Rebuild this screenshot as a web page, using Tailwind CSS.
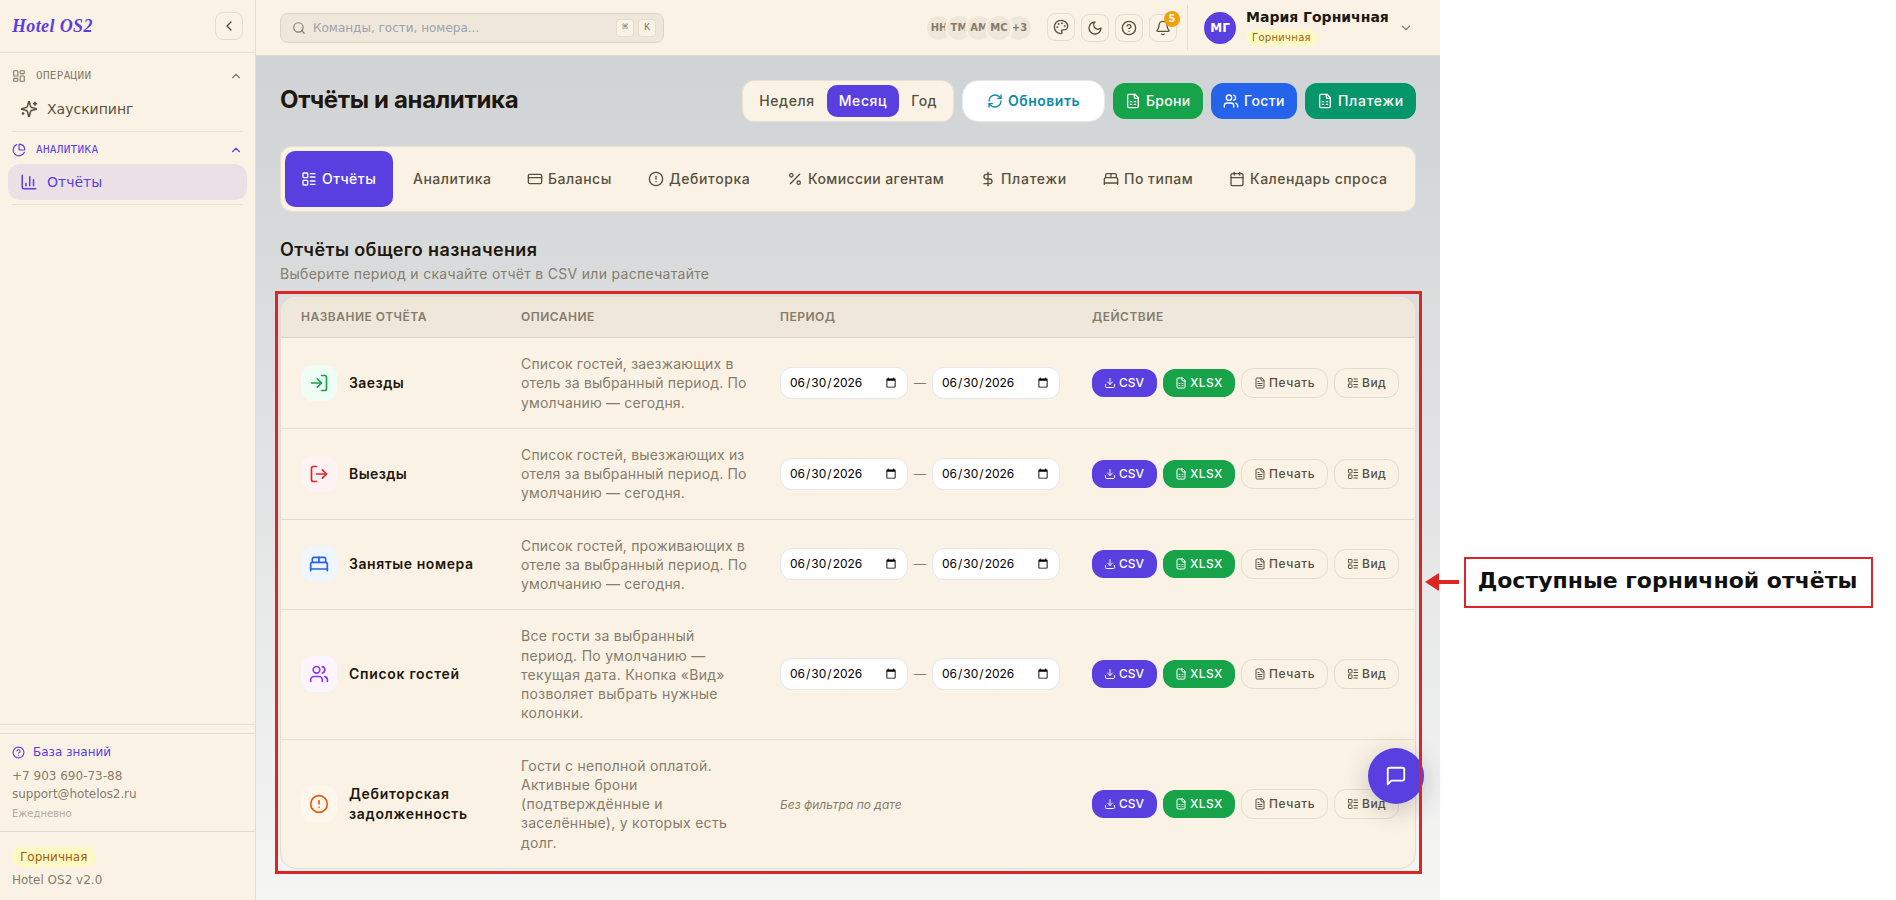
<!DOCTYPE html>
<html lang="ru">
<head>
  <meta charset="UTF-8">
  <title>Отчёты и аналитика — Hotel OS2</title>
  <script src="https://cdn.jsdelivr.net/npm/@tailwindcss/browser@4"></script>
  <style>
    body { font-family: "DejaVu Sans", sans-serif; }
    svg { fill: none; stroke: currentColor; stroke-width: 2; stroke-linecap: round; stroke-linejoin: round; flex-shrink: 0; }
  </style>
</head>
<body class="bg-white w-[1896px] h-[900px] overflow-hidden relative">

  <!-- Icon set -->
  <svg class="hidden">
    <symbol id="left" viewBox="0 0 24 24"><path d="m15 18-6-6 6-6"/></symbol>
    <symbol id="up" viewBox="0 0 24 24"><path d="m18 15-6-6-6 6"/></symbol>
    <symbol id="down" viewBox="0 0 24 24"><path d="m6 9 6 6 6-6"/></symbol>
    <symbol id="dashboard" viewBox="0 0 24 24"><rect width="7" height="9" x="3" y="3" rx="1"/><rect width="7" height="5" x="14" y="3" rx="1"/><rect width="7" height="9" x="14" y="12" rx="1"/><rect width="7" height="5" x="3" y="16" rx="1"/></symbol>
    <symbol id="sparkles" viewBox="0 0 24 24"><path d="M9.937 15.5A2 2 0 0 0 8.5 14.063l-6.135-1.582a.5.5 0 0 1 0-.962L8.5 9.936A2 2 0 0 0 9.937 8.5l1.582-6.135a.5.5 0 0 1 .963 0L14.063 8.5A2 2 0 0 0 15.5 9.937l6.135 1.581a.5.5 0 0 1 0 .964L15.5 14.063a2 2 0 0 0-1.437 1.437l-1.582 6.135a.5.5 0 0 1-.963 0z"/><path d="M20 3v4"/><path d="M22 5h-4"/><path d="M4 17v2"/><path d="M5 18H3"/></symbol>
    <symbol id="pie" viewBox="0 0 24 24"><path d="M21 12c.552 0 1.005-.449.95-.998a10 10 0 0 0-8.953-8.951c-.55-.055-.998.398-.998.95v8a1 1 0 0 0 1 1z"/><path d="M21.21 15.89A10 10 0 1 1 8 2.83"/></symbol>
    <symbol id="chart" viewBox="0 0 24 24"><path d="M3 3v16a2 2 0 0 0 2 2h16"/><path d="M18 17V9"/><path d="M13 17V5"/><path d="M8 17v-3"/></symbol>
    <symbol id="help" viewBox="0 0 24 24"><circle cx="12" cy="12" r="10"/><path d="M9.09 9a3 3 0 0 1 5.83 1c0 2-3 3-3 3"/><path d="M12 17h.01"/></symbol>
    <symbol id="search" viewBox="0 0 24 24"><circle cx="11" cy="11" r="8"/><path d="m21 21-4.3-4.3"/></symbol>
    <symbol id="palette" viewBox="0 0 24 24"><circle cx="13.5" cy="6.5" r=".5" fill="currentColor"/><circle cx="17.5" cy="10.5" r=".5" fill="currentColor"/><circle cx="8.5" cy="7.5" r=".5" fill="currentColor"/><circle cx="6.5" cy="12.5" r=".5" fill="currentColor"/><path d="M12 2C6.5 2 2 6.5 2 12s4.5 10 10 10c.926 0 1.648-.746 1.648-1.688 0-.437-.18-.835-.437-1.125-.29-.289-.438-.652-.438-1.125a1.64 1.64 0 0 1 1.668-1.668h1.996c3.051 0 5.555-2.503 5.555-5.554C21.965 6.012 17.461 2 12 2z"/></symbol>
    <symbol id="moon" viewBox="0 0 24 24"><path d="M12 3a6 6 0 0 0 9 9 9 9 0 1 1-9-9Z"/></symbol>
    <symbol id="bell" viewBox="0 0 24 24"><path d="M10.268 21a2 2 0 0 0 3.464 0"/><path d="M3.262 15.326A1 1 0 0 0 4 17h16a1 1 0 0 0 .74-1.673C19.41 13.956 18 12.499 18 8A6 6 0 0 0 6 8c0 4.499-1.411 5.956-2.738 7.326"/></symbol>
    <symbol id="refresh" viewBox="0 0 24 24"><path d="M3 12a9 9 0 0 1 9-9 9.75 9.75 0 0 1 6.74 2.74L21 8"/><path d="M21 3v5h-5"/><path d="M21 12a9 9 0 0 1-9 9 9.75 9.75 0 0 1-6.74-2.74L3 16"/><path d="M8 16H3v5"/></symbol>
    <symbol id="sheet" viewBox="0 0 24 24"><path d="M15 2H6a2 2 0 0 0-2 2v16a2 2 0 0 0 2 2h12a2 2 0 0 0 2-2V7Z"/><path d="M14 2v4a2 2 0 0 0 2 2h4"/><path d="M8 13h2"/><path d="M14 13h2"/><path d="M8 17h2"/><path d="M14 17h2"/></symbol>
    <symbol id="doc" viewBox="0 0 24 24"><path d="M15 2H6a2 2 0 0 0-2 2v16a2 2 0 0 0 2 2h12a2 2 0 0 0 2-2V7Z"/><path d="M14 2v4a2 2 0 0 0 2 2h4"/><path d="M10 9H8"/><path d="M16 13H8"/><path d="M16 17H8"/></symbol>
    <symbol id="users" viewBox="0 0 24 24"><path d="M16 21v-2a4 4 0 0 0-4-4H6a4 4 0 0 0-4 4v2"/><circle cx="9" cy="7" r="4"/><path d="M22 21v-2a4 4 0 0 0-3-3.87"/><path d="M16 3.13a4 4 0 0 1 0 7.75"/></symbol>
    <symbol id="list" viewBox="0 0 24 24"><rect width="7" height="7" x="3" y="3" rx="1"/><rect width="7" height="7" x="3" y="14" rx="1"/><path d="M14 4h7"/><path d="M14 9h7"/><path d="M14 15h7"/><path d="M14 20h7"/></symbol>
    <symbol id="card" viewBox="0 0 24 24"><rect width="20" height="14" x="2" y="5" rx="2"/><path d="M2 10h20"/></symbol>
    <symbol id="alert" viewBox="0 0 24 24"><circle cx="12" cy="12" r="10"/><path d="M12 8v4"/><path d="M12 16h.01"/></symbol>
    <symbol id="percent" viewBox="0 0 24 24"><path d="M19 5 5 19"/><circle cx="6.5" cy="6.5" r="2.5"/><circle cx="17.5" cy="17.5" r="2.5"/></symbol>
    <symbol id="dollar" viewBox="0 0 24 24"><path d="M12 2v20"/><path d="M17 5H9.5a3.5 3.5 0 0 0 0 7h5a3.5 3.5 0 0 1 0 7H6"/></symbol>
    <symbol id="bed" viewBox="0 0 24 24"><path d="M2 20v-8a2 2 0 0 1 2-2h16a2 2 0 0 1 2 2v8"/><path d="M4 10V6a2 2 0 0 1 2-2h12a2 2 0 0 1 2 2v4"/><path d="M12 4v6"/><path d="M2 18h20"/></symbol>
    <symbol id="calendar" viewBox="0 0 24 24"><path d="M8 2v4"/><path d="M16 2v4"/><rect width="18" height="18" x="3" y="4" rx="2"/><path d="M3 10h18"/></symbol>
    <symbol id="login" viewBox="0 0 24 24"><path d="M15 3h4a2 2 0 0 1 2 2v14a2 2 0 0 1-2 2h-4"/><path d="m10 17 5-5-5-5"/><path d="M15 12H3"/></symbol>
    <symbol id="logout" viewBox="0 0 24 24"><path d="M9 21H5a2 2 0 0 1-2-2V5a2 2 0 0 1 2-2h4"/><path d="m16 17 5-5-5-5"/><path d="M21 12H9"/></symbol>
    <symbol id="download" viewBox="0 0 24 24"><path d="M21 15v4a2 2 0 0 1-2 2H5a2 2 0 0 1-2-2v-4"/><path d="m7 10 5 5 5-5"/><path d="M12 15V3"/></symbol>
    <symbol id="message" viewBox="0 0 24 24"><path d="M21 15a2 2 0 0 1-2 2H7l-4 4V5a2 2 0 0 1 2-2h14a2 2 0 0 1 2 2z"/></symbol>
  </svg>

  <div class="flex w-[1440px] h-[900px] bg-linear-to-b from-[#cdd1d3] to-[#f5f5f4]">

    <!-- Sidebar -->
    <aside class="w-64 shrink-0 h-full flex flex-col bg-[#faf3e5] border-r border-[#e3dccf]">
      <div class="h-[53px] flex items-center justify-between px-3 border-b border-[#e3dccf]">
        <span class="font-['Liberation_Serif'] italic font-bold text-lg tracking-[0.36px] text-[#5a3fe0]">Hotel OS2</span>
        <button class="size-7 rounded-lg border border-[#e3dccf] flex items-center justify-center text-[#57503f]"><svg class="size-4"><use href="#left"/></svg></button>
      </div>

      <nav class="flex-1 pt-[11px]">
        <div class="px-3">
          <div class="h-6 flex items-center text-[#857c6c] font-['DejaVu_Sans_Mono'] text-[11px] tracking-[0.3px]">
            <svg class="size-3.5 mr-[10px]"><use href="#dashboard"/></svg>ОПЕРАЦИИ
            <svg class="size-3.5 ml-auto"><use href="#up"/></svg>
          </div>
        </div>
        <a class="mx-2 mt-[3px] h-9 px-3 flex items-center gap-[9px] text-sm text-[#57503f]"><svg class="size-[18px]"><use href="#sparkles"/></svg>Хаускипинг</a>
        <div class="mx-3 mt-1 border-t border-[#e9e1d3]"></div>
        <div class="px-3 mt-1.5">
          <div class="h-6 flex items-center text-[#5a3fe0] font-['DejaVu_Sans_Mono'] text-[11px] tracking-[0.3px]">
            <svg class="size-3.5 mr-[10px]"><use href="#pie"/></svg>АНАЛИТИКА
            <svg class="size-3.5 ml-auto"><use href="#up"/></svg>
          </div>
        </div>
        <a class="mx-2 mt-0.5 h-9 px-3 flex items-center gap-[9px] text-sm text-[#5a3fe0] bg-[#eae0e5] rounded-xl"><svg class="size-[18px]"><use href="#chart"/></svg>Отчёты</a>
        <div class="mx-3 mt-1 border-t border-[#e9e1d3]"></div>
      </nav>

      <div class="border-t border-[#e3dccf] pt-2">
        <div class="h-[98px] border-t border-[#e3dccf] px-3 pt-[10px] text-xs text-[#857c6c]">
          <div class="flex items-center gap-2 text-[#5a3fe0]"><svg class="size-[13px]"><use href="#help"/></svg>База знаний</div>
          <div class="mt-2">+7 903 690-73-88</div>
          <div class="mt-0.5 tracking-[-0.08px]">support@hotelos2.ru</div>
          <div class="mt-1 text-[10px] leading-[15px] text-[#b3ab9c]">Ежедневно</div>
        </div>
        <div class="h-[69px] border-t border-[#e3dccf] px-3 pt-[15px] text-xs text-[#857c6c]">
          <span class="inline-block bg-[#fef9c3] text-[#a16207] rounded-full px-2 leading-5">Горничная</span>
          <div class="mt-[5px]">Hotel OS2 v2.0</div>
        </div>
      </div>
    </aside>

    <div class="flex-1 min-w-0 flex flex-col">

      <!-- Top bar -->
      <header class="h-14 shrink-0 flex items-center px-6 bg-[#faf3e5] border-b border-[#e3dccf]">
        <div class="w-96 h-[30px] rounded-lg border border-[#dad2c4] bg-[#efe7da] flex items-center pl-[11px] pr-[7px] text-xs text-[#9ca3af]">
          <svg class="size-3.5 mr-[7px] text-[#857c6c]"><use href="#search"/></svg>Команды, гости, номера...
          <div class="ml-auto flex gap-1 text-[10px] text-[#857c6c] font-['DejaVu_Sans_Mono']">
            <kbd class="size-[18px] rounded bg-[#faf3e5] border border-[#e3dccf] flex items-center justify-center">⌘</kbd>
            <kbd class="size-[18px] rounded bg-[#faf3e5] border border-[#e3dccf] flex items-center justify-center">K</kbd>
          </div>
        </div>

        <div class="ml-[261px] flex text-[10px] font-bold text-[#857c6c]">
          <span class="size-7 rounded-full border-2 border-[#faf3e5] bg-[#efe7da] flex items-center justify-center">НН</span>
          <span class="size-7 -ml-2 rounded-full border-2 border-[#faf3e5] bg-[#efe7da] flex items-center justify-center">ТМ</span>
          <span class="size-7 -ml-2 rounded-full border-2 border-[#faf3e5] bg-[#efe7da] flex items-center justify-center">АМ</span>
          <span class="relative z-10 size-7 -ml-2 rounded-full border-2 border-[#faf3e5] bg-[#efe7da] flex items-center justify-center">МС</span>
          <span class="size-7 -ml-2 rounded-full border-2 border-[#faf3e5] bg-[#efe7da] flex items-center justify-center pl-px">+3</span>
        </div>

        <div class="ml-[14px] flex gap-1.5 text-[#57503f]">
          <button class="size-7 -mt-px rounded-lg border border-[#e3dccf] flex items-center justify-center"><svg class="size-4"><use href="#palette"/></svg></button>
          <button class="size-7 rounded-lg border border-[#e3dccf] flex items-center justify-center"><svg class="size-4"><use href="#moon"/></svg></button>
          <button class="size-7 rounded-lg border border-[#e3dccf] flex items-center justify-center"><svg class="size-4"><use href="#help"/></svg></button>
          <button class="relative size-7 rounded-lg border border-[#e3dccf] flex items-center justify-center"><svg class="size-4"><use href="#bell"/></svg>
            <span class="absolute -top-1 -right-1 size-4 rounded-full bg-[#f59e0b] text-white text-[10px] font-bold flex items-center justify-center">5</span>
          </button>
        </div>

        <div class="ml-[10px] h-[45px] w-[229px] border-l border-[#e3dccf] flex items-center pl-4">
          <span class="size-8 rounded-full bg-[#5a3fe0] text-white text-xs font-bold flex items-center justify-center">МГ</span>
          <div class="ml-[10px] -mt-px">
            <div class="text-sm leading-[17px] font-bold text-[#1f170d]">Мария Горничная</div>
            <span class="block w-fit mt-1 bg-[#fef9c3] text-[#a16207] rounded-full px-1.5 text-[10px] leading-4 tracking-[0.3px]">Горничная</span>
          </div>
          <svg class="size-3.5 ml-[10px] text-[#857c6c]"><use href="#down"/></svg>
        </div>
      </header>

      <!-- Content -->
      <main class="flex-1 px-6 pt-6 font-['Inter'] text-sm text-[#57503f]">
        <div class="flex items-center">
          <h1 class="-mt-0.5 text-2xl font-bold tracking-[-0.36px] text-[#1f170d]">Отчёты и аналитика</h1>
          <div class="ml-auto flex items-center font-medium">
            <div class="flex p-1 h-[42px] rounded-xl border border-[#e8e0d0] bg-[#faf3e5] tracking-[0.6px]">
              <button class="w-20">Неделя</button>
              <button class="w-[72px] rounded-[10px] bg-[#5a3fe0] text-white">Месяц</button>
              <button class="w-[50px] tracking-[0.3px]">Год</button>
            </div>
            <button class="ml-2 w-[143px] h-[42px] pl-6 rounded-2xl border border-[#e5e7eb] bg-white text-[#0e8aa8] font-semibold tracking-[0.5px] flex items-center gap-[5px]"><svg class="size-4"><use href="#refresh"/></svg>Обновить</button>
            <button class="ml-2 w-[90px] h-9 pl-3 rounded-xl bg-[#16a34a] text-white tracking-[0.3px] flex items-center gap-[5px]"><svg class="size-4"><use href="#sheet"/></svg>Брони</button>
            <button class="ml-2 w-[86px] h-9 pl-3 rounded-xl bg-[#2563eb] text-white tracking-[0.4px] flex items-center gap-[5px]"><svg class="size-4"><use href="#users"/></svg>Гости</button>
            <button class="ml-2 w-[111px] h-9 pl-3 rounded-xl bg-[#059669] text-white tracking-[0.7px] flex items-center gap-[5px]"><svg class="size-4"><use href="#sheet"/></svg>Платежи</button>
          </div>
        </div>

        <div class="mt-6 h-[66px] p-1 flex gap-1 rounded-xl border border-[#e8e0d0] bg-[#faf3e5] font-medium tracking-[0.5px]">
          <button class="w-[108px] pl-4 rounded-[10px] bg-[#5a3fe0] text-white flex items-center gap-[5px]"><svg class="size-4"><use href="#list"/></svg>Отчёты</button>
          <button class="w-[110px] pl-4 flex items-center">Аналитика</button>
          <button class="w-[117px] pl-4 flex items-center gap-[5px]"><svg class="size-4"><use href="#card"/></svg>Балансы</button>
          <button class="w-[135px] pl-4 flex items-center gap-[5px] tracking-[0.6px]"><svg class="size-4"><use href="#alert"/></svg>Дебиторка</button>
          <button class="w-[189px] pl-4 flex items-center gap-[5px] tracking-[0.4px] whitespace-nowrap"><svg class="size-4"><use href="#percent"/></svg>Комиссии агентам</button>
          <button class="w-[119px] pl-4 flex items-center gap-[5px] tracking-[0.7px]"><svg class="size-4"><use href="#dollar"/></svg>Платежи</button>
          <button class="w-[122px] pl-4 flex items-center gap-[5px]"><svg class="size-4"><use href="#bed"/></svg>По типам</button>
          <button class="w-[190px] pl-4 flex items-center gap-[5px] whitespace-nowrap"><svg class="size-4"><use href="#calendar"/></svg>Календарь спроса</button>
        </div>

        <h2 class="mt-6 text-lg leading-7 font-semibold tracking-[0.38px] text-[#1f170d]">Отчёты общего назначения</h2>
        <p class="text-[#857c6c] tracking-[0.3px]">Выберите период и скачайте отчёт в CSV или распечатайте</p>

        <div class="mt-3 rounded-2xl border border-[#e3dccf] bg-[#faf3e5] overflow-hidden">
          <table class="w-full table-fixed border-separate border-spacing-0">
            <colgroup><col class="w-[220px]"><col class="w-[259px]"><col class="w-[312px]"><col></colgroup>
            <thead class="bg-[#efe7da] text-xs text-left text-[#857c6c] tracking-[0.5px]">
              <tr>
                <th class="py-3 pl-5 font-semibold border-b border-[#dad2c4]">НАЗВАНИЕ ОТЧЁТА</th>
                <th class="py-3 pl-5 font-semibold border-b border-[#dad2c4]">ОПИСАНИЕ</th>
                <th class="py-3 pl-5 font-semibold border-b border-[#dad2c4]">ПЕРИОД</th>
                <th class="py-3 pl-5 font-semibold border-b border-[#dad2c4]">ДЕЙСТВИЕ</th>
              </tr>
            </thead>
            <tbody id="reports"></tbody>
          </table>
        </div>
      </main>
    </div>
  </div>

  <!-- Chat button -->
  <button class="absolute left-[1368px] top-[748px] size-14 rounded-full bg-[#5a3fe0] text-white flex items-center justify-center shadow-[0_6px_24px_rgba(60,40,60,0.25)]"><svg class="size-[22px]"><use href="#message"/></svg></button>

  <!-- Callout -->
  <div class="absolute left-[275px] top-[291px] w-[1147px] h-[583px] border-3 border-[#dc2626]"></div>
  <div class="absolute left-[1425px] top-[573px] flex items-center">
    <div class="border-y-[9px] border-y-transparent border-r-[14px] border-r-[#dc2626]"></div>
    <div class="w-5 h-1 bg-[#dc2626]"></div>
  </div>
  <div class="absolute left-[1464px] top-[557px] w-[409px] h-[51px] pr-0.5 border-2 border-[#dc2626] bg-white text-[#111] text-[22px] leading-[43px] font-bold text-center whitespace-nowrap">Доступные горничной отчёты</div>

  <script>
    const reports = [
      { icon: 'login', tile: 'bg-[#f0fdf4] text-[#16a34a]', track: 'tracking-[0.45px]', name: 'Заезды', textTrack: 'tracking-[0.17px]', text: 'Список гостей, заезжающих в отель за выбранный период. По умолчанию — сегодня.', dates: true },
      { icon: 'logout', tile: 'bg-[#fef2f2] text-[#dc2626]', track: 'tracking-[0.4px]', name: 'Выезды', textTrack: 'tracking-[0.17px]', text: 'Список гостей, выезжающих из отеля за выбранный период. По умолчанию — сегодня.', dates: true },
      { icon: 'bed', tile: 'bg-[#eff6ff] text-[#2563eb]', track: 'tracking-[0.55px]', name: 'Занятые номера', textTrack: 'tracking-[0.17px]', text: 'Список гостей, проживающих в отеле за выбранный период. По умолчанию — сегодня.', dates: true },
      { icon: 'users', tile: 'bg-[#faf5ff] text-[#9333ea]', track: 'tracking-[0.7px]', name: 'Список гостей', textTrack: 'tracking-[0.28px]', text: 'Все гости за выбранный период. По умолчанию — текущая дата. Кнопка «Вид» позволяет выбрать нужные колонки.', dates: true },
      { icon: 'alert', tile: 'bg-[#fff7ed] text-[#ea580c]', track: 'tracking-[0.68px]', name: 'Дебиторская задолженность', textTrack: 'tracking-[0.28px]', text: 'Гости с неполной оплатой. Активные брони (подтверждённые и заселённые), у которых есть долг.', dates: false }
    ];

    const dateInput = '<input type="date" value="2026-06-30" class="w-[128px] h-8 px-2 rounded-xl border border-[#e5e7eb] bg-white text-xs text-black">';

    reports.forEach((r, i) => {
      const line = i < reports.length - 1 ? 'border-b border-[#e3dccf]' : '';
      const period = r.dates
        ? `<div class="flex items-center gap-1.5 text-xs text-[#857c6c]">${dateInput}<span>—</span>${dateInput}</div>`
        : '<span class="text-xs italic text-[#857c6c]">Без фильтра по дате</span>';
      document.getElementById('reports').innerHTML += `
        <tr>
          <td class="py-4 pl-5 ${line}">
            <div class="flex items-center gap-3 font-semibold text-[#1f170d] ${r.track}">
              <span class="size-9 shrink-0 rounded-xl flex items-center justify-center ${r.tile}"><svg class="size-5"><use href="#${r.icon}"/></svg></span>${r.name}
            </div>
          </td>
          <td class="py-4 pl-5 pr-2 leading-snug text-[#857c6c] ${r.textTrack} ${line}">${r.text}</td>
          <td class="py-4 pl-5 ${line}">${period}</td>
          <td class="py-4 pl-5 ${line}">
            <div class="flex items-center gap-1.5 text-xs font-medium">
              <button class="w-[65px] h-7 pl-3 rounded-xl bg-[#5a3fe0] text-white flex items-center gap-[3px]"><svg class="size-3"><use href="#download"/></svg>CSV</button>
              <button class="w-[72px] h-7 pl-3 rounded-xl bg-[#16a34a] text-white tracking-[0.4px] flex items-center gap-[3px]"><svg class="size-3"><use href="#sheet"/></svg>XLSX</button>
              <button class="w-[87px] h-[30px] pl-3 rounded-xl border border-[#e3dccf] tracking-[0.6px] flex items-center gap-[3px]"><svg class="size-3"><use href="#doc"/></svg>Печать</button>
              <button class="w-[65px] h-[30px] pl-3 rounded-xl border border-[#e3dccf] tracking-[0.5px] flex items-center gap-[3px]"><svg class="size-3"><use href="#list"/></svg>Вид</button>
            </div>
          </td>
        </tr>`;
    });
  </script>
</body>
</html>
